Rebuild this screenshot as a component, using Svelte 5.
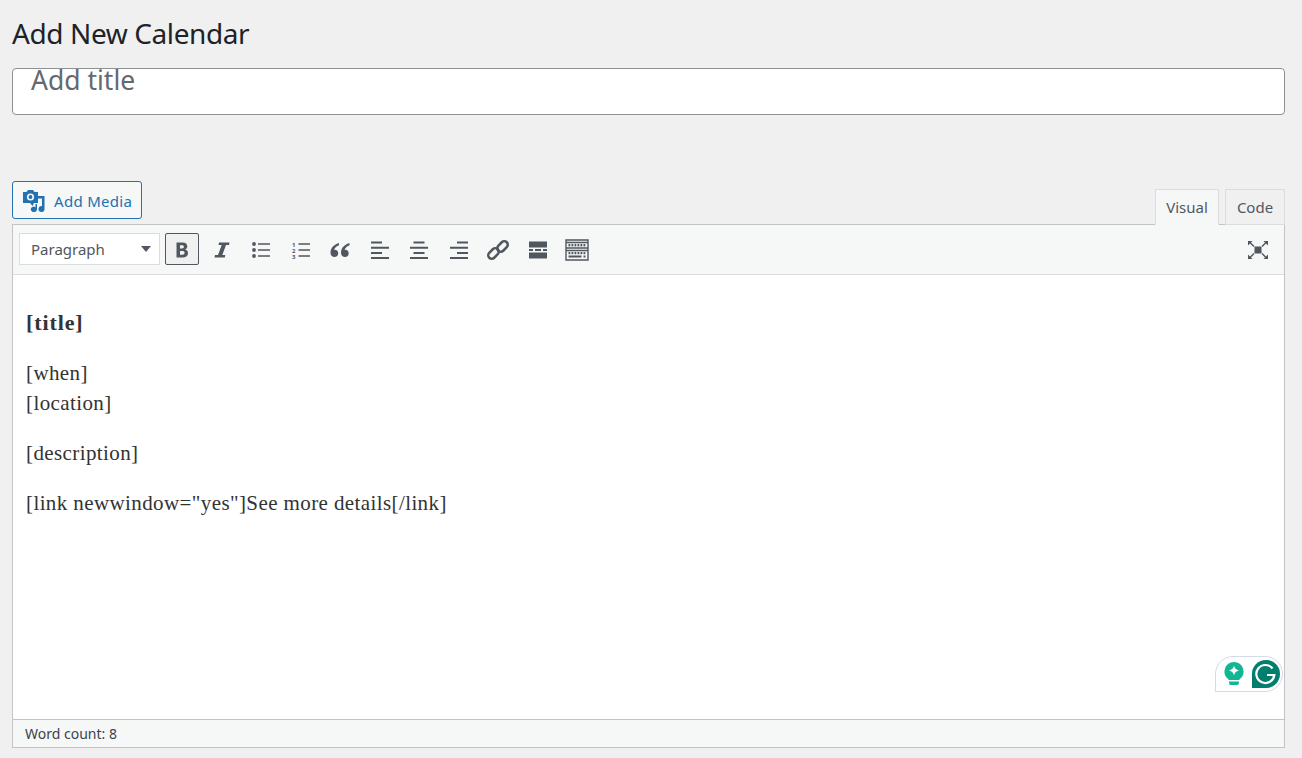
<script lang="ts">
  const listGap = 5.5;
  const topDots = [3, 6, 9, 12, 15, 18];
  const lowDots = [3, 6, 9, 12, 15, 18];
</script>

<div class="wrap">
  <h1>Add New Calendar</h1>

  <div class="title-box">
    <span class="title-placeholder">Add title</span>
  </div>

  <div class="editor-head">
    <button class="media-btn">
      <svg width="24" height="24" viewBox="0 0 24 24">
        <path fill="#2271b1" d="M0 3h3.500L5 1h5l1.500 2H15v11h-4l-1.500 3L7 14H0z" />
        <circle cx="7.500" cy="8" r="3.600" fill="#f6f7f7" />
        <circle cx="7.500" cy="8" r="1.900" fill="#2271b1" />
        <path fill="#2271b1" d="M14.500 7H21.500V20a3 3 0 1 1-2.500-3V9.500h-4.500z" />
        <path fill="#2271b1" d="M10.500 23a2.700 2.700 0 1 1 2-4.500V15h1.500v5.500a3 3 0 0 1-3.500 2.500z" />
      </svg>
      <span>Add Media</span>
    </button>
    <div class="tabs">
      <div class="tab active">Visual</div>
      <div class="tab">Code</div>
    </div>
  </div>

  <div class="editor">
    <div class="toolbar">
      <div class="format">
        <span>Paragraph</span>
        <i class="caret"></i>
      </div>
      <div class="tools" style="gap: {listGap}px">
        <button class="tool bold">
          <svg width="20" height="20" viewBox="0 0 20 20"><path fill-rule="evenodd" d="M4.500 2.500h6.200c2.800 0 4.600 1.400 4.600 3.800 0 1.500-.8 2.700-2.200 3.200 1.800.4 2.900 1.700 2.900 3.600 0 2.800-2 4.400-5 4.400H4.500zM8 5.300v3.100h2c1.200 0 1.900-.6 1.900-1.600s-.7-1.500-1.900-1.500zM8 11v3.700h2.400c1.400 0 2.200-.7 2.200-1.900S11.800 11 10.400 11z" /></svg>
        </button>
        <button class="tool">
          <svg width="20" height="20" viewBox="0 0 20 20"><path d="M7 2.500h10.500l-.5 2.400h-3L10.300 15.100h3l-.5 2.400H2.500l.5-2.400h3L9.700 4.900h-3.200z" /></svg>
        </button>
        <button class="tool">
          <svg width="20" height="20" viewBox="0 0 20 20"><circle cx="3" cy="4" r="1.900" /><circle cx="3" cy="10" r="1.900" /><circle cx="3" cy="16" r="1.900" /><path d="M7 3.300h12v1.400H7zM7 9.300h12v1.400H7zM7 15.300h12v1.400H7z" /></svg>
        </button>
        <button class="tool">
          <svg width="20" height="20" viewBox="0 0 20 20"><path d="M7.500 3.300h11.500v1.400H7.500zM7.500 9.300h11.500v1.400H7.500zM7.500 15.300h11.500v1.400H7.500z" /><text x="1" y="6.500" class="num">1</text><text x="1" y="12.500" class="num">2</text><text x="1" y="18.500" class="num">3</text></svg>
        </button>
        <button class="tool">
          <svg width="20" height="20" viewBox="0 0 20 20"><path d="M9 3C5 4 .5 7.500.5 12.500c0 2.500 1.500 4.500 4 4.500 2.200 0 3.700-1.500 3.700-3.700S6.700 9.800 5 9.800c-.4 0-.7 0-1 .2C4.500 7.800 7 6 9 5.300zM19.500 3c-4 1-8.500 4.500-8.500 9.500 0 2.500 1.500 4.500 4 4.500 2.200 0 3.700-1.500 3.700-3.700s-1.500-3.500-3.200-3.500c-.4 0-.7 0-1 .2.500-2.200 3-4 5-4.700z" /></svg>
        </button>
        <button class="tool">
          <svg width="20" height="20" viewBox="0 0 20 20"><path d="M1 1.500h11v2H1zM1 6.800h18v2H1zM1 12h11v2H1zM1 17h18v2H1z" /></svg>
        </button>
        <button class="tool">
          <svg width="20" height="20" viewBox="0 0 20 20"><path d="M4.500 1.500h11v2h-11zM1 17h18v2H1zM4.500 12h11v2h-11zM1 6.800h18v2H1z" /></svg>
        </button>
        <button class="tool">
          <svg width="20" height="20" viewBox="0 0 20 20"><path d="M8 1.500h11v2H8zM1 6.800h18v2H1zM8 12h11v2H8zM1 17h18v2H1z" /></svg>
        </button>
        <button class="tool">
          <svg width="24" height="24" viewBox="0 0 24 24"><g fill="none" stroke="#50575e" stroke-width="2.500"><rect x="1.500" y="12" width="12" height="7" rx="3.500" transform="rotate(-45 7.500 15.500)" /><rect x="10.500" y="5" width="12" height="7" rx="3.500" transform="rotate(-45 16.500 8.500)" /></g></svg>
        </button>
        <button class="tool">
          <svg width="20" height="20" viewBox="0 0 20 20"><path d="M1 1.500h18v6H1zM1 9h4v2H1zM7 9h6v2H7zM15 9h4v2h-4zM1 12.500h18v6H1z" /></svg>
        </button>
        <button class="tool">
          <svg width="24" height="22" viewBox="0 0 24 22">
            <path fill="none" stroke="#50575e" stroke-width="1.400" d="M1 1h22v20H1zM1 3.500h22M1 9h22M1 11.500h22" />
            {#each topDots as x}<rect x={x + 0.5} y="5" width="1.800" height="2.400" />{/each}
            {#each lowDots as x}<rect x={x + 0.5} y="13" width="1.800" height="2.200" />{/each}
            <path d="M3.500 16.500h13v2h-13zM18.500 16.500h2v2h-2z" />
          </svg>
        </button>
      </div>
      <button class="tool fullscreen">
        <svg width="22" height="20" viewBox="0 0 22 20"><path d="M7.500 6.500h7v7h-7z" /><path d="M1 1h4.500L4 2.500 7.500 6l-1 1L3 3.500 1 5.500zM21 1h-4.500L18 2.500 14.500 6l1 1L19 3.500l2 2zM1 19h4.500L4 17.500 7.500 14l-1-1L3 16.500l-2-2zM21 19h-4.500l1.500-1.500-3.500-3.500 1-1 3.500 3.500 2-2z" /></svg>
      </button>
    </div>

    <div class="content">
      <p><strong>[title]</strong></p>
      <p>[when]<br />[location]</p>
      <p>[description]</p>
      <p>[link newwindow="yes"]See more details[/link]</p>

      <div class="grammarly">
        <svg width="22" height="26" viewBox="0 0 22 26">
          <path fill="#11b695" d="M11 1a9.500 9.500 0 0 1 5.500 17.200V19h-11v-.8A9.500 9.500 0 0 1 11 1z" />
          <path fill="#fff" d="M11 4.500c.7 3 1.800 4.100 5 5-3.200.9-4.300 2-5 5-.7-3-1.800-4.100-5-5 3.200-.9 4.300-2 5-5z" />
          <path fill="#11b695" d="M6 20.500h10V22a2 2 0 0 1-2 2H8a2 2 0 0 1-2-2z" />
        </svg>
        <svg width="28" height="28" viewBox="0 0 28 28">
          <path fill="#027e6f" d="M14 0a14 14 0 0 1 0 28H0V14A14 14 0 0 1 14 0z" />
          <path fill="none" stroke="#fff" stroke-width="2.200" d="M20.500 8.500a9 9 0 1 0 1.800 6.500h-7.300" />
        </svg>
      </div>
    </div>

    <div class="status">Word count: 8</div>
  </div>
</div>

<style>
  :global(body) {
    background: #f0f0f1;
    font-family: "Noto Sans", "Open Sans", sans-serif;
  }
  .wrap {
    width: 1273px;
    height: 758px;
    padding-left: 12px;
    overflow: hidden;
  }
  h1 {
    margin: 0;
    padding-top: 14px;
    font-size: 28px;
    line-height: 38px;
    height: 53px;
    font-weight: 400;
    color: #1d2327;
    letter-spacing: -0.4px;
    box-sizing: border-box;
  }
  .title-box {
    height: 47px;
    margin-top: 15px;
    box-sizing: border-box;
    background: #fff;
    border: 1px solid #8c8f94;
    border-radius: 4px;
    padding-left: 18px;
  }
  .title-placeholder {
    display: block;
    font-size: 26.500px;
    line-height: 22px;
    color: #646970;
  }
  .editor-head {
    display: flex;
    justify-content: space-between;
    align-items: flex-end;
    margin-top: 65px;
    height: 44px;
  }
  .media-btn {
    display: flex;
    align-items: center;
    gap: 7px;
    width: 130px;
    height: 38px;
    margin-bottom: 5px;
    padding: 1px 0 0 10px;
    box-sizing: border-box;
    background: #f6f7f7;
    border: 1px solid #2271b1;
    border-radius: 3px;
    color: #2271b1;
    font: inherit;
    font-size: 15px;
    letter-spacing: 0.3px;
  }
  .tabs {
    display: flex;
    gap: 6px;
    margin-bottom: -1px;
    position: relative;
  }
  .tab {
    height: 36px;
    box-sizing: border-box;
    width: 60px;
    border: 1px solid #dcdcde;
    background: #f0f0f1;
    color: #50575e;
    font-size: 15px;
    line-height: 35px;
    text-align: center;
  }
  .tab.active {
    width: 64px;
    background: #f6f7f7;
    border-bottom-color: #f6f7f7;
  }
  .editor {
    height: 524px;
    box-sizing: border-box;
    border: 1px solid #c3c4c7;
    display: flex;
    flex-direction: column;
    background: #fff;
  }
  .toolbar {
    height: 50px;
    flex: none;
    box-sizing: border-box;
    background: #f6f7f7;
    border-bottom: 1px solid #dcdcde;
    display: flex;
    align-items: center;
    padding: 0 9px 2px 6px;
  }
  .format {
    width: 141px;
    height: 32px;
    box-sizing: border-box;
    background: #fff;
    border: 1px solid #dcdcde;
    display: flex;
    align-items: center;
    justify-content: space-between;
    padding: 1px 8px 0 11px;
    font-size: 15px;
    color: #50575e;
    margin-right: 5px;
  }
  .caret {
    width: 0;
    height: 0;
    border-left: 5px solid transparent;
    border-right: 5px solid transparent;
    border-top: 6px solid #50575e;
  }
  .tools {
    display: flex;
    flex: 1;
  }
  .tool {
    width: 34px;
    height: 32px;
    flex: none;
    padding: 2px 0 0;
    display: flex;
    align-items: center;
    justify-content: center;
    background: transparent;
    border: 1px solid transparent;
    border-radius: 2px;
  }
  .tool svg {
    fill: #50575e;
  }
  .tool.bold {
    background: #f0f0f1;
    border-color: #50575e;
  }
  .num {
    font-size: 6px;
    font-weight: 700;
    font-family: "Noto Sans", sans-serif;
  }
  .content {
    flex: 1;
    position: relative;
    padding: 33px 13px 0;
    font-family: "Liberation Serif", serif;
    font-size: 21px;
    letter-spacing: 0.4px;
    line-height: 30px;
    color: #333;
  }
  .content p {
    margin: 0 0 20px;
  }
  .content strong {
    font-size: 22px;
    letter-spacing: 0.9px;
  }
  .grammarly {
    position: absolute;
    right: 1px;
    bottom: 27px;
    width: 68px;
    height: 36px;
    box-sizing: border-box;
    background: #fff;
    border: 1px solid #d5dae8;
    border-radius: 18px 18px 18px 0;
    display: flex;
    align-items: center;
    gap: 7px;
    padding-left: 7px;
  }
  .status {
    height: 28px;
    flex: none;
    box-sizing: border-box;
    background: #f6f7f7;
    border-top: 1px solid #c3c4c7;
    padding-left: 12px;
    font-size: 14px;
    line-height: 27px;
    color: #3c434a;
  }
</style>
